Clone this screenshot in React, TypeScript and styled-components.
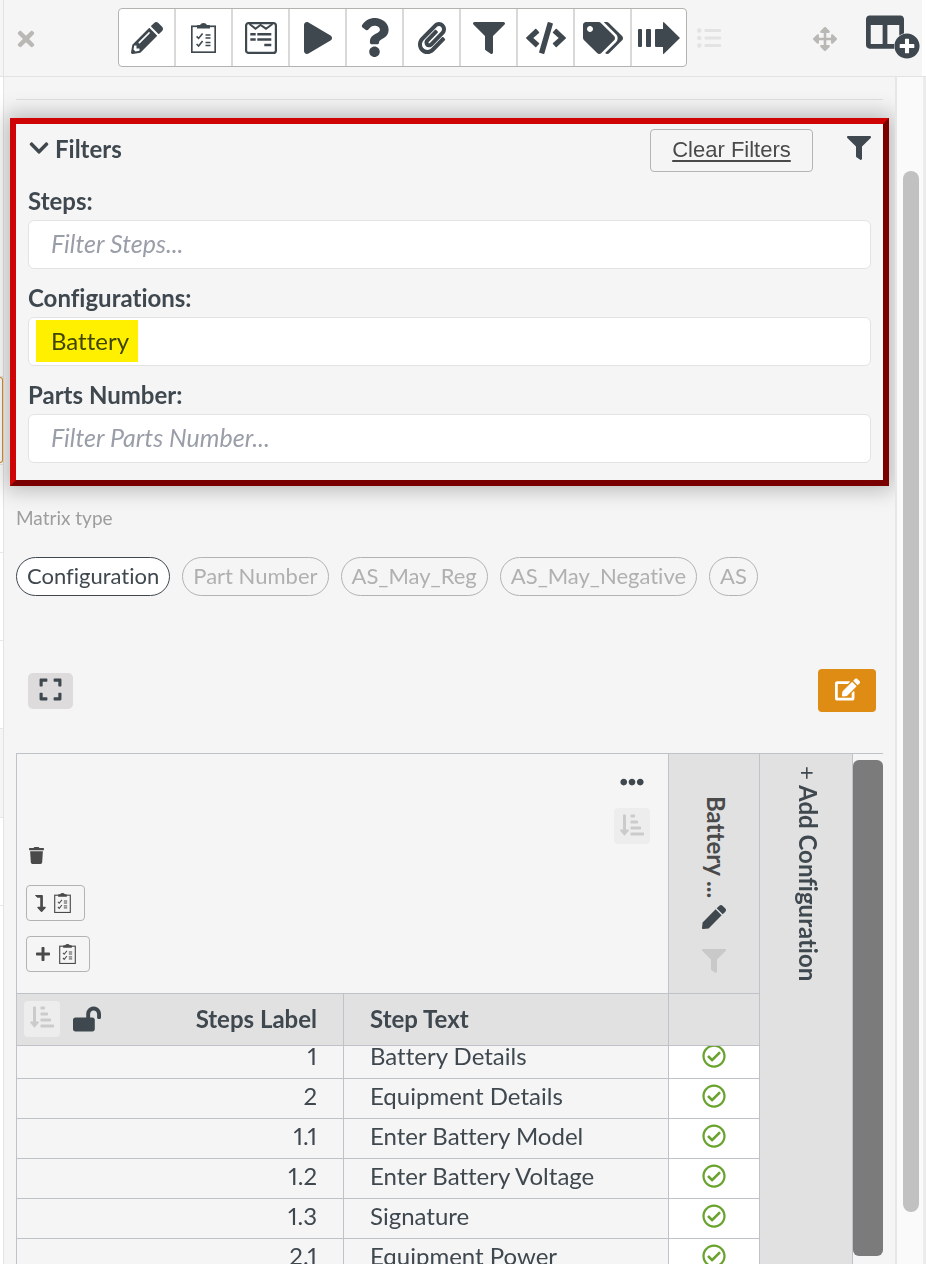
import React, { useLayoutEffect, useRef, useState } from "react";
import styled, { createGlobalStyle } from "styled-components";
import {
  FaTimes, FaPencilAlt, FaPlay, FaQuestion, FaPaperclip, FaFilter, FaCode, FaTags, FaListUl,
  FaArrowsAlt, FaColumns, FaPlusCircle, FaChevronDown, FaExpand, FaEdit, FaEllipsisH,
  FaSortAmountDownAlt, FaTrash, FaLevelDownAlt, FaPlus, FaLockOpen, FaPen, FaRegCheckCircle,
} from "react-icons/fa";

const ink = "#3f484f";
const line = "#bfc2c9";
const surface = "#f5f5f5";
const shade = "#e1e1e1";

const GlobalStyle = createGlobalStyle`
  *, *::before, *::after { box-sizing: border-box; }
  body {
    margin: 0;
    background: #fff;
    color: ${ink};
    font-family: Lato, "Liberation Sans", sans-serif;
    font-size: 24px;
    font-variant-ligatures: none;
    font-variant-numeric: proportional-nums;
  }
  button, input { font: inherit; color: inherit; margin: 0; }
  button { cursor: pointer; padding: 0; }
  svg { display: block; flex: none; }
`;

const Screen = styled.div`
  display: flex;
  height: 100vh;
  overflow: hidden;
`;

/* Edge of the list that sits behind the panel */
const Backdrop = styled.div`
  flex: none;
  width: 3px;
  background: #fff;
`;
const BackdropHead = styled.div`
  height: 77px;
  background: ${surface};
  border-bottom: 1px solid #e3e3e3;
`;
const BackdropRow = styled.div<{ $h: number; $tint?: boolean }>`
  height: ${(p) => p.$h}px;
  border-bottom: 1px solid #e8e8e8;
  background: ${(p) => (p.$tint ? surface : "#fff")};
`;
const BackdropCard = styled.div`
  height: 86px;
  border: 1px solid #e0901a;
  border-left: 0;
  border-radius: 0 6px 6px 0;
`;

const Panel = styled.div`
  flex: 1;
  min-width: 0;
  display: flex;
  flex-direction: column;
  border-left: 1px solid #e3e3e3;
`;

const Header = styled.header`
  flex: none;
  height: 77px;
  padding-right: 4px;
  border-bottom: 1px solid #e3e3e3;
`;
const HeaderBar = styled.div`
  display: flex;
  align-items: center;
  height: 76px;
  padding: 0 2px 1px 10px;
  background: ${surface};
`;
const PlainButton = styled.button<{ $color?: string }>`
  display: flex;
  align-items: center;
  justify-content: center;
  border: 0;
  background: none;
  color: ${(p) => p.$color ?? ink};
`;
const MutedButton = styled(PlainButton)`
  padding-top: 3px;
  color: #b9b8b4;
`;
const ToolGroup = styled.div`
  display: flex;
  height: 59px;
  margin: 0 10px 0 80px;
  border: 1px solid #b3b3b0;
  border-radius: 4px;
  background: #fff;
  overflow: hidden;
`;
const ToolButton = styled.button`
  display: flex;
  align-items: center;
  justify-content: center;
  width: 57px;
  border: 0;
  border-right: 2px solid #d9d9d9;
  background: none;
  &:last-child { width: 54px; border-right: 0; }
`;
const HeaderEnd = styled.div`
  display: flex;
  align-items: center;
  gap: 29px;
  margin-left: auto;
`;
const ColumnsButton = styled(PlainButton)`
  position: relative;
  width: 54px;
  height: 50px;
  align-items: flex-start;
  justify-content: flex-start;
`;
const PlusBadge = styled.span`
  position: absolute;
  right: 0;
  bottom: 4px;
  border-radius: 50%;
  background: #fff;
`;

const Body = styled.div`
  flex: 1;
  min-height: 0;
  display: flex;
  background: ${surface};
`;
const Content = styled.main`
  flex: 1;
  min-width: 0;
  display: flex;
  flex-direction: column;
  padding: 22px 12px 0;
`;
const PageTrack = styled.div`
  flex: none;
  width: 31px;
  padding: 94px 4px 52px 6px;
  border-left: 2px solid #e6e6e6;
  border-right: 3px solid #ececec;
  background: #fafafa;
`;
const PageThumb = styled.div`
  height: 100%;
  width: 16px;
  border-radius: 8px;
  background: #c1c1c1;
`;

const Rule = styled.hr`
  flex: none;
  width: 100%;
  margin: 0;
  border: 0;
  border-top: 1px solid #dfdfdf;
`;

const FilterBox = styled.section`
  flex: none;
  margin: 18px -6px 0;
  padding: 5px 12px 17px;
  border: 6px solid;
  border-color: #cf0404 #7a0000 #7a0000 #cf0404;
  box-shadow: 0 0 20px 4px rgba(0, 0, 0, 0.25);
`;
const FilterHead = styled.div`
  display: flex;
  align-items: center;
  height: 43px;
`;
const HeadButton = styled(PlainButton)`
  gap: 5px;
  padding-bottom: 5px;
  font-weight: 700;
`;
const ClearButton = styled.button`
  width: 163px;
  height: 43px;
  margin: 0 34px 0 auto;
  padding-bottom: 2px;
  border: 1px solid #b5b5b5;
  border-radius: 4px;
  background: none;
  color: #4a4a4a;
  font: 22px "Liberation Sans", Arial, sans-serif;
  text-decoration: underline;
  text-underline-offset: 3px;
`;
const Field = styled.div`
  position: relative;
  margin-top: 15px;
`;
const FieldLabel = styled.label`
  display: block;
  height: 33px;
  line-height: 28px;
  font-weight: 700;
`;
const FieldInput = styled.input`
  display: block;
  width: 100%;
  height: 49px;
  padding: 0 22px 2px;
  border: 1px solid #e3e3e3;
  border-radius: 6px;
  background: #fff;
  outline: 0;
  &::placeholder { color: #9a9ea8; font-style: italic; font-size: 25px; opacity: 1; }
`;
const Highlight = styled.span`
  position: absolute;
  left: 8px;
  bottom: 4px;
  width: 102px;
  height: 42px;
  background: #fff000;
  mix-blend-mode: multiply;
  pointer-events: none;
`;

const MatrixLabel = styled.div`
  margin-top: 20px;
  font-size: 19px;
  line-height: 24px;
  color: #9d9d9d;
`;
const Pills = styled.div`
  display: flex;
  gap: 12px;
  margin-top: 27px;
`;
const Pill = styled.button<{ $active: boolean }>`
  height: 39px;
  padding: 0 10px 2px;
  border: 1px solid ${(p) => (p.$active ? ink : "#b3b3b3")};
  border-radius: 20px;
  background: ${(p) => (p.$active ? "#fff" : "transparent")};
  color: ${(p) => (p.$active ? ink : "#b0b0b0")};
  font-size: 22px;
  white-space: nowrap;
`;
const Actions = styled.div`
  display: flex;
  align-items: center;
  justify-content: space-between;
  margin-top: 73px;
  padding: 0 7px 0 12px;
`;
const ExpandButton = styled.button`
  display: flex;
  justify-content: center;
  width: 45px;
  height: 36px;
  padding-top: 4px;
  border: 0;
  border-radius: 5px;
  background: #dddbdc;
`;
const EditButton = styled.button`
  display: flex;
  align-items: center;
  justify-content: center;
  width: 58px;
  height: 43px;
  padding-bottom: 2px;
  border: 0;
  border-radius: 4px;
  background: #de8c14;
  color: #fff;
`;

const Matrix = styled.div`
  flex: 1;
  min-height: 0;
  display: flex;
  margin-top: 41px;
  border-top: 1px solid ${line};
  border-left: 1px solid ${line};
`;
const Scroller = styled.div`
  flex: 1;
  min-width: 0;
  overflow-y: auto;
  overflow-x: hidden;
  scrollbar-width: none;
`;
const Table = styled.table`
  width: 100%;
  table-layout: fixed;
  border-collapse: separate;
  border-spacing: 0;
  thead { position: sticky; top: 0; z-index: 1; }
`;
const Cell = styled.td<{ $end?: boolean }>`
  height: 40px;
  padding: 0 26px 5px;
  border-right: 1px solid ${line};
  border-bottom: 1px solid ${line};
  background: ${surface};
  line-height: 30px;
  text-align: ${(p) => (p.$end ? "right" : "left")};
  white-space: nowrap;
`;
const CheckCell = styled(Cell)`
  padding: 0 0 5px;
  background: #fff;
  color: #69a22c;
  svg { margin: 0 auto; }
`;
const HeadCell = styled.th`
  height: 52px;
  padding: 0 26px 3px;
  border-right: 1px solid ${line};
  border-bottom: 1px solid ${line};
  background: ${shade};
  font-weight: 700;
  text-align: left;
`;
const CornerCell = styled.td`
  height: 240px;
  padding: 0;
  border-right: 1px solid ${line};
  border-bottom: 1px solid ${line};
  background: ${surface};
`;
const Corner = styled.div`
  display: flex;
  justify-content: space-between;
  height: 239px;
  padding: 16px 18px 21px 9px;
`;
const CornerStart = styled.div`
  display: flex;
  flex-direction: column;
  align-items: flex-start;
  justify-content: flex-end;
  gap: 15px;
`;
const CornerEnd = styled.div`
  display: flex;
  flex-direction: column;
  align-items: center;
  gap: 14px;
`;
const TrashButton = styled(PlainButton)`
  width: 20px;
  height: 29px;
  color: #4a4a4a;
`;
const OutlineButton = styled.button<{ $lead: number }>`
  display: flex;
  align-items: center;
  gap: 8px;
  height: 36px;
  padding: 0 13px 0 8px;
  border: 1px solid #b3b3b3;
  border-radius: 4px;
  background: none;
  color: #4a4a4a;
  svg:first-child { width: ${(p) => p.$lead}px; }
`;
const SortButton = styled.button`
  display: flex;
  align-items: center;
  justify-content: center;
  width: 36px;
  height: 36px;
  padding-bottom: 3px;
  border: 0;
  border-radius: 4px;
  background: #ededed;
  color: #cbcbcb;
`;
const LabelHead = styled.div`
  display: flex;
  align-items: center;
  gap: 13px;
  span { margin-left: auto; }
`;
const LabelHeadCell = styled(HeadCell)`
  padding: 0 26px 2px 7px;
`;
const ConfigHeadCell = styled(HeadCell)`
  padding: 42px 0 0;
  vertical-align: top;
`;
const ConfigHead = styled.div`
  display: flex;
  flex-direction: column;
  align-items: center;
  svg + svg { margin-top: 20px; }
`;
const VerticalName = styled.span`
  height: 109px;
  padding-left: 4px;
  writing-mode: vertical-rl;
  line-height: 26px;
  color: #4a4a4a;
  white-space: nowrap;
`;
const AddConfiguration = styled.button`
  flex: none;
  display: flex;
  align-items: center;
  width: 93px;
  padding: 12px 0 0 4px;
  border: 0;
  border-right: 1px solid ${line};
  background: ${shade};
  font-weight: 700;
  writing-mode: vertical-rl;
  white-space: nowrap;
`;
const PlusSign = styled.span`
  margin-bottom: 5px;
  font-weight: 400;
`;
const MatrixTrack = styled.div`
  flex: none;
  width: 30px;
  padding: 6px 0 8px;
`;
const MatrixThumb = styled.div`
  height: 100%;
  border-radius: 6px;
  background: #7b7b7b;
`;

const ClipboardIcon = ({ width = 25, height = 30 }: { width?: number; height?: number }) => (
  <svg width={width} height={height} viewBox="0 0 25 30" fill="none" stroke="currentColor">
    <rect x="0.8" y="3.3" width="23.4" height="25.9" strokeWidth="1.7" />
    <path d="M6 5.600V2.600Q6 2 7 2H9Q10 0 12.500 0T16 2H18Q19 2 19 2.600V5.600Z" fill="currentColor" stroke="none" />
    <path d="M5.600 13.400l2 2 4-5M5.600 21l2 2 4-5" strokeWidth="1.600" />
    <path d="M14.500 12h5M14.500 15h5M14.500 19.400h5M14.500 22.400h5" strokeWidth="1.500" />
  </svg>
);

const FormIcon = () => (
  <svg width="32" height="32" viewBox="0 0 32 32" fill="none" stroke="currentColor">
    <rect x="1.1" y="1.1" width="29.800" height="29.800" rx="2.5" strokeWidth="2.2" />
    <path d="M4.500 2l6 4.700 5-3.700 5.500 3.700 6.500-4.700" strokeWidth="2" />
    <path d="M5.300 12.200h5.400M12.300 12.200h14M5.300 17.600h5.400M12.300 17.600h14M19.300 23h7" strokeWidth="2.500" />
  </svg>
);

const ForwardIcon = () => (
  <svg width="42" height="32" viewBox="0 0 42 32" fill="currentColor">
    <rect x="0" y="7" width="4" height="18" rx="1" />
    <rect x="8" y="7" width="5" height="18" rx="1" />
    <path d="M18 7h7V1q0-1.600 1.200-.4L42 16 26.200 31.400Q25 32.600 25 31V25h-7q-1 0-1-1V8q0-1 1-1z" />
  </svg>
);

const tools = [
  { name: "Edit", icon: <FaPencilAlt size={32} /> },
  { name: "Checklist", icon: <ClipboardIcon /> },
  { name: "Form", icon: <FormIcon /> },
  { name: "Run", icon: <FaPlay size={32} /> },
  { name: "Help", icon: <FaQuestion size={39} /> },
  { name: "Attach", icon: <FaPaperclip size={32} /> },
  { name: "Filter", icon: <FaFilter size={32} /> },
  { name: "Code", icon: <FaCode size={40} /> },
  { name: "Tags", icon: <FaTags size={40} /> },
  { name: "Forward", icon: <ForwardIcon /> },
];

const matrixTypes = ["Configuration", "Part Number", "AS_May_Reg", "AS_May_Negative", "AS"];

const steps = [
  ["1", "Battery Details"],
  ["2", "Equipment Details"],
  ["1.1", "Enter Battery Model"],
  ["1.2", "Enter Battery Voltage"],
  ["1.3", "Signature"],
  ["2.1", "Equipment Power"],
];

export default function App() {
  const [active, setActive] = useState("Configuration");
  const [config, setConfig] = useState("Battery");
  const scroller = useRef<HTMLDivElement>(null);

  useLayoutEffect(() => {
    if (scroller.current) scroller.current.scrollTop = 7;
  }, []);

  return (
    <>
      <GlobalStyle />
      <Screen>
        <Backdrop>
          <BackdropHead />
          <BackdropRow $h={300} />
          <BackdropCard />
          <BackdropRow $h={2} />
          <BackdropRow $h={88} />
          <BackdropRow $h={88} />
          <BackdropRow $h={88} />
          <BackdropRow $h={89} $tint />
          <BackdropRow $h={88} />
        </Backdrop>
        <Panel>
          <Header>
            <HeaderBar>
              <MutedButton aria-label="Close"><FaTimes size={24} /></MutedButton>
              <ToolGroup>
                {tools.map((t) => (
                  <ToolButton key={t.name} aria-label={t.name}>{t.icon}</ToolButton>
                ))}
              </ToolGroup>
              <PlainButton $color="#e3e3e3" aria-label="List"><FaListUl size={24} /></PlainButton>
              <HeaderEnd>
                <MutedButton aria-label="Move"><FaArrowsAlt size={24} /></MutedButton>
                <ColumnsButton aria-label="Add column">
                  <FaColumns size={38} />
                  <PlusBadge><FaPlusCircle size={26} /></PlusBadge>
                </ColumnsButton>
              </HeaderEnd>
            </HeaderBar>
          </Header>
          <Body>
            <Content>
              <Rule />
              <FilterBox>
                <FilterHead>
                  <HeadButton aria-expanded="true"><FaChevronDown size={22} />Filters</HeadButton>
                  <ClearButton>Clear Filters</ClearButton>
                  <HeadButton aria-label="Apply filters"><FaFilter size={24} /></HeadButton>
                </FilterHead>
                <Field>
                  <FieldLabel htmlFor="steps">Steps:</FieldLabel>
                  <FieldInput id="steps" placeholder="Filter Steps..." />
                </Field>
                <Field>
                  <FieldLabel htmlFor="configurations">Configurations:</FieldLabel>
                  <FieldInput id="configurations" value={config} onChange={(e) => setConfig(e.target.value)} />
                  <Highlight />
                </Field>
                <Field>
                  <FieldLabel htmlFor="parts">Parts Number:</FieldLabel>
                  <FieldInput id="parts" placeholder="Filter Parts Number..." />
                </Field>
              </FilterBox>
              <MatrixLabel>Matrix type</MatrixLabel>
              <Pills>
                {matrixTypes.map((t) => (
                  <Pill key={t} $active={t === active} onClick={() => setActive(t)}>{t}</Pill>
                ))}
              </Pills>
              <Actions>
                <ExpandButton aria-label="Full screen"><FaExpand size={25} /></ExpandButton>
                <EditButton aria-label="Edit matrix"><FaEdit size={25} /></EditButton>
              </Actions>
              <Matrix>
                <Scroller ref={scroller}>
                  <Table>
                    <colgroup>
                      <col style={{ width: 327 }} />
                      <col />
                      <col style={{ width: 91 }} />
                    </colgroup>
                    <thead>
                      <tr>
                        <CornerCell colSpan={2}>
                          <Corner>
                            <CornerStart>
                              <TrashButton aria-label="Delete"><FaTrash size={17} /></TrashButton>
                              <OutlineButton $lead={11} aria-label="Insert step below"><FaLevelDownAlt size={17} /><ClipboardIcon width={17} height={20} /></OutlineButton>
                              <OutlineButton $lead={16} aria-label="Add step"><FaPlus size={16} /><ClipboardIcon width={17} height={20} /></OutlineButton>
                            </CornerStart>
                            <CornerEnd>
                              <PlainButton aria-label="More"><FaEllipsisH size={24} /></PlainButton>
                              <SortButton aria-label="Sort configurations"><FaSortAmountDownAlt size={24} /></SortButton>
                            </CornerEnd>
                          </Corner>
                        </CornerCell>
                        <ConfigHeadCell>
                          <ConfigHead>
                            <VerticalName>Battery ...</VerticalName>
                            <FaPen size={24} />
                            <FaFilter size={24} color="#c9c9c9" />
                          </ConfigHead>
                        </ConfigHeadCell>
                      </tr>
                      <tr>
                        <LabelHeadCell>
                          <LabelHead>
                            <SortButton aria-label="Sort steps"><FaSortAmountDownAlt size={24} /></SortButton>
                            <FaLockOpen size={28} />
                            <span>Steps Label</span>
                          </LabelHead>
                        </LabelHeadCell>
                        <HeadCell>Step Text</HeadCell>
                        <HeadCell />
                      </tr>
                    </thead>
                    <tbody>
                      {steps.map(([label, text]) => (
                        <tr key={label}>
                          <Cell $end>{label}</Cell>
                          <Cell>{text}</Cell>
                          <CheckCell><FaRegCheckCircle size={24} /></CheckCell>
                        </tr>
                      ))}
                    </tbody>
                  </Table>
                </Scroller>
                <AddConfiguration><PlusSign>+</PlusSign>Add Configuration</AddConfiguration>
                <MatrixTrack><MatrixThumb /></MatrixTrack>
              </Matrix>
            </Content>
            <PageTrack><PageThumb /></PageTrack>
          </Body>
        </Panel>
      </Screen>
    </>
  );
}
